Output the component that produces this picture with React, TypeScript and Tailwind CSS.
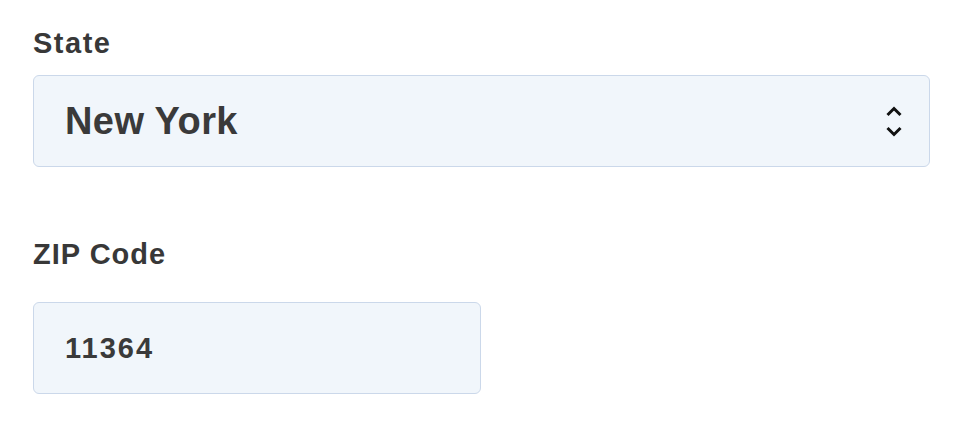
const ChevronUpDown = () => (
  <svg width="18" height="31" viewBox="0 0 18 31" fill="none" className="shrink-0">
    <path d="M2.5 9 L9 2.5 L15.5 9" stroke="#111111" strokeWidth="3" strokeLinecap="butt" strokeLinejoin="miter" />
    <path d="M2.5 22 L9 28.5 L15.5 22" stroke="#111111" strokeWidth="3" strokeLinecap="butt" strokeLinejoin="miter" />
  </svg>
);

const App = () => {
  return (
    <div className="min-h-[424px] w-[968px] bg-white pl-[33px] pt-[25px] text-[#383838] font-['Liberation_Sans',Arial,sans-serif]">
      {/* State */}
      <label className="block text-[29px] font-bold leading-[36px] tracking-[1.5px]">State</label>
      <div className="mt-[14px] flex h-[92px] w-[897px] items-center justify-between rounded-[6px] border border-[#cbd8ea] bg-[#f1f6fb] pl-[31px] pr-[26px]">
        <span className="text-[38px] font-bold leading-none tracking-[0.4px] text-[#3a3a3a]">New York</span>
        <ChevronUpDown />
      </div>

      {/* ZIP */}
      <label className="mt-[69px] block text-[29px] font-bold leading-[36px] tracking-[1px]">ZIP Code</label>
      <div className="mt-[30px] flex h-[92px] w-[448px] items-center rounded-[6px] border border-[#cbd8ea] bg-[#f1f6fb] pl-[31px]">
        <span className="text-[29px] font-bold leading-none tracking-[2px] text-[#3a3a3a]">11364</span>
      </div>
    </div>
  );
};

export default App;
